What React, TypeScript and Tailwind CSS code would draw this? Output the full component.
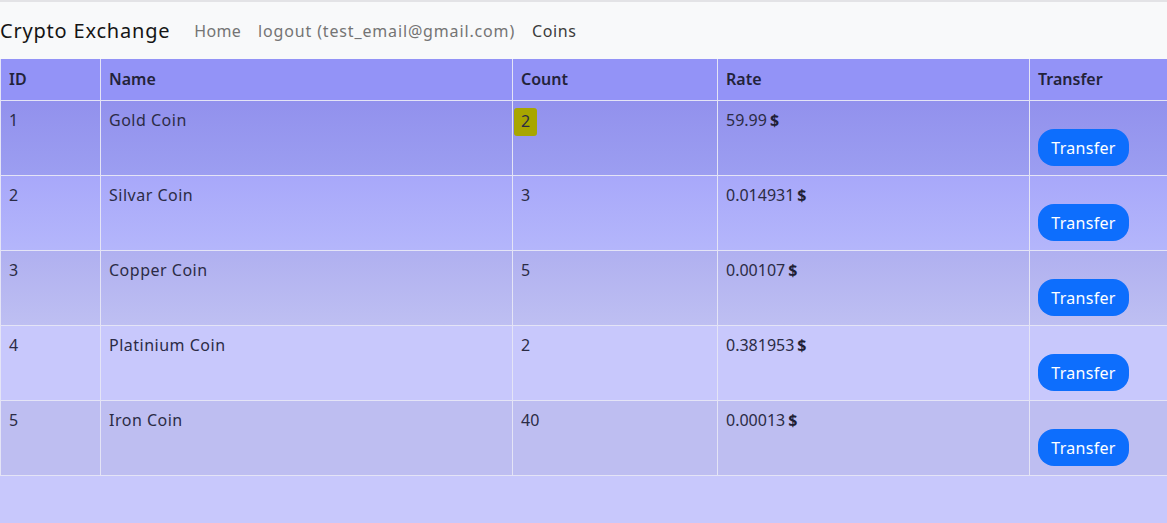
import { Fragment } from "react";

const coins = [
  { id: 1, name: "Gold Coin", count: "2", rate: "59.99", bg: "bg-gradient-to-b from-[#9291ed] to-[#9c9ef1]", mark: true },
  { id: 2, name: "Silvar Coin", count: "3", rate: "0.014931", bg: "bg-gradient-to-b from-[#a8a8fa] to-[#b4b6fb]" },
  { id: 3, name: "Copper Coin", count: "5", rate: "0.00107", bg: "bg-gradient-to-b from-[#b0b0f0] to-[#bebff2]" },
  { id: 4, name: "Platinium Coin", count: "2", rate: "0.381953", bg: "bg-[#c8c8fc]" },
  { id: 5, name: "Iron Coin", count: "40", rate: "0.00013", bg: "bg-[#bebef1]" },
];

const cell = "border-r border-b border-[#e4e4f6] px-2 text-[16px] leading-6 text-[#2b2b45]";

export default function App() {
  return (
    <div className="min-h-[523px] bg-[#c8c8fc] font-['Noto_Sans',sans-serif]">
      {/* Navbar */}
      <nav className="flex h-[59px] items-center border-t-2 border-[#e3e3e6] bg-[#f8f9fa]">
        <span className="mr-[24px] text-[20px] tracking-[0.8px] text-[#151515]">Crypto Exchange</span>
        <a className="mr-[17px] text-[16px] tracking-[0.3px] text-[#747474]">Home</a>
        <a className="mr-[17px] text-[16px] tracking-[0.85px] text-[#747474]">logout (test_email@gmail.com)</a>
        <a className="text-[16px] tracking-[0.6px] text-[#3b3b3b]">Coins</a>
      </nav>

      {/* Coins table */}
      <div className="grid grid-cols-[100px_412px_205px_312px_138px] border-l border-[#e4e4f6]">
        {["ID", "Name", "Count", "Rate", "Transfer"].map((h) => (
          <div key={h} className={`${cell} h-[42px] bg-[#9393f7] pt-[8px] font-semibold text-[#23233a]`}>
            {h}
          </div>
        ))}
        {coins.map((c) => (
          <Fragment key={c.id}>
            <div className={`${cell} ${c.bg} h-[75px] pt-[7px]`}>{c.id}</div>
            <div className={`${cell} ${c.bg} h-[75px] pt-[7px] tracking-[0.5px]`}>{c.name}</div>
            <div className={`${cell} ${c.bg} h-[75px] pt-[7px]`}>
              {c.mark ? (
                <span className="-ml-[7px] inline-block rounded-[3px] bg-[#a8a600] px-[7px] pt-[1px] pb-[3px]">{c.count}</span>
              ) : (
                c.count
              )}
            </div>
            <div className={`${cell} ${c.bg} h-[75px] pt-[7px]`}>
              {c.rate}
              <span className="ml-[3px] font-bold text-[#1f1f35]">$</span>
            </div>
            <div className={`${cell} ${c.bg} h-[75px] pt-[7px]`}>
              <button className="mt-[21px] h-[37px] w-[91px] rounded-[16px] bg-[#0d6efd] text-[16px] tracking-[0.3px] text-white">
                Transfer
              </button>
            </div>
          </Fragment>
        ))}
      </div>
    </div>
  );
}
